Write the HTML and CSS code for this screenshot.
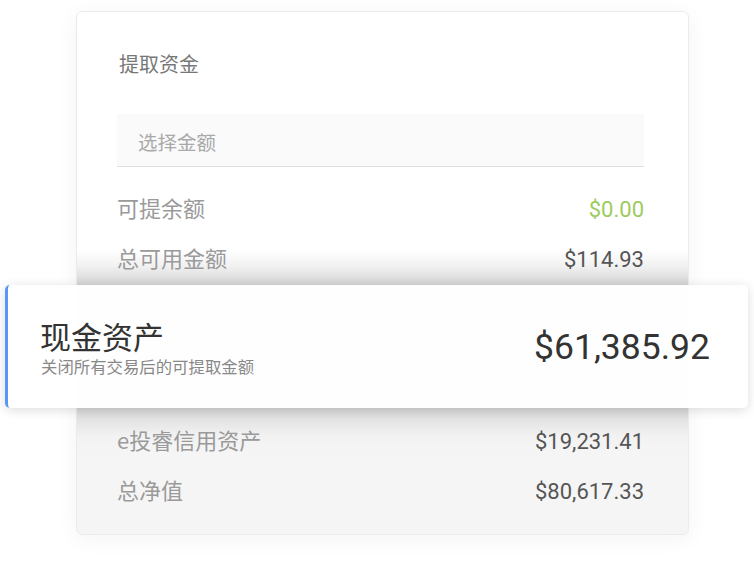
FILE: index.html
```html
<!DOCTYPE html>
<html lang="zh-CN">
<head>
<meta charset="utf-8">
<title>提取资金</title>
<link rel="stylesheet" href="styles.css">
</head>
<body>
<div class="page">
  <div class="card">
    <div class="title">提取资金</div>
    <div class="select">选择金额</div>
    <div class="row">
      <span class="label">可提余额</span>
      <span class="value green">$0.00</span>
    </div>
    <div class="row">
      <span class="label">总可用金额</span>
      <span class="value">$114.93</span>
    </div>
    <div class="highlight">
      <div class="hl-text">
        <div class="hl-title">现金资产</div>
        <div class="hl-sub">关闭所有交易后的可提取金额</div>
      </div>
      <div class="hl-value">$61,385.92</div>
    </div>
    <div class="row">
      <span class="label">e投睿信用资产</span>
      <span class="value">$19,231.41</span>
    </div>
    <div class="row">
      <span class="label">总净值</span>
      <span class="value">$80,617.33</span>
    </div>
  </div>
</div>
</body>
</html>
```

FILE: styles.css
```css
* { box-sizing: border-box; }
html, body { margin: 0; padding: 0; background: #ffffff; }
body {
  width: 754px;
  height: 562px;
  overflow: hidden;
  font-family: "Noto Sans CJK SC", "Noto Sans", sans-serif;
}
.page {
  padding: 11px 0 0 76px;
}
.card {
  width: 613px;
  border: 1px solid #ebebef;
  border-radius: 6px;
  padding: 37px 44px 20px 40px;
  box-shadow: 0 4px 22px rgba(20, 30, 60, 0.05);
  background: linear-gradient(to bottom,
    #ffffff 0px, #ffffff 238px,
    #f1f1f1 254px, #d6d6d6 272px, #d6d6d6 396px,
    #e2e2e2 406px, #f2f2f2 424px, #f5f5f5 440px, #f5f5f5 100%);
}
.title {
  font-size: 20px;
  line-height: 30px;
  color: #777777;
  padding-left: 2px;
}
.select {
  margin-top: 35px;
  height: 53px;
  padding-top: 3px;
  line-height: 49px;
  background: #fafafa;
  border-bottom: 1px solid #e0e0e0;
  padding-left: 21px;
  font-size: 19.5px;
  color: #a9a9a9;
}
.select + .row { margin-top: 15px; }
.row {
  height: 50px;
  display: flex;
  align-items: center;
  justify-content: space-between;
}
.label {
  font-size: 22px;
  color: #9a9a9a;
}
.value {
  font-family: Roboto, "Liberation Sans", sans-serif;
  font-size: 22px;
  color: #555555;
  padding-top: 5px;
}
.value.green { color: #9ccb5e; }
.highlight {
  position: relative;
  margin: 3px -104px 6px -112px;
  height: 123px;
  background: rgba(255, 255, 255, 0.97);
  border-left: 3px solid #5a96f6;
  border-radius: 5px;
  box-shadow: 0 2px 12px rgba(0, 0, 0, 0.14);
  padding: 0 38px 0 32px;
  display: flex;
  align-items: center;
  justify-content: space-between;
}
.hl-text { display: flex; flex-direction: column; gap: 2px; margin-top: 0; }
.hl-title {
  font-size: 31px;
  line-height: 36px;
  color: #333333;
}
.hl-sub {
  font-size: 16.4px;
  line-height: 20px;
  color: #888888;
  padding-left: 1px;
}
.hl-value {
  font-family: Roboto, "Liberation Sans", sans-serif;
  font-size: 35.5px;
  color: #333333;
}
```
